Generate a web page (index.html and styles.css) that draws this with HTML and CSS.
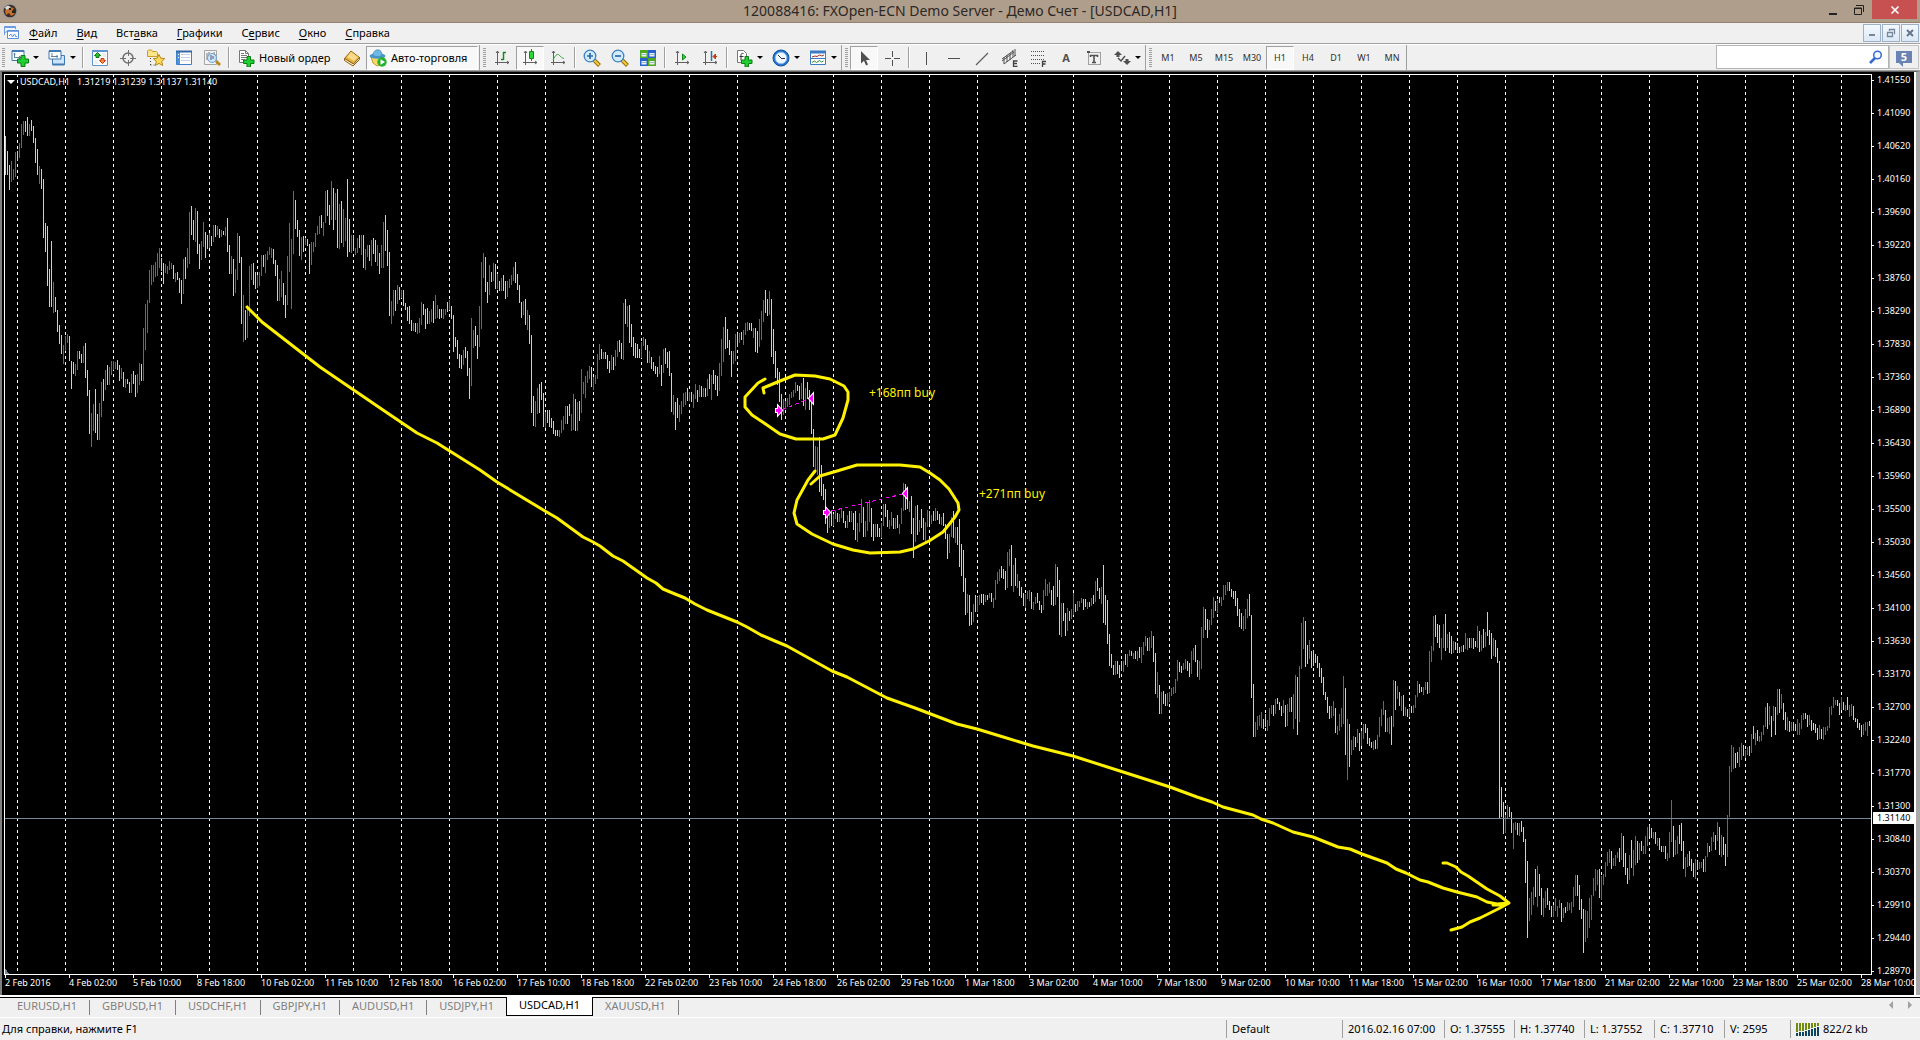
FILE: index.html
```html
<!DOCTYPE html>
<html lang="ru">
<head>
<meta charset="utf-8">
<meta name="viewport" content="width=device-width, initial-scale=1">
<title>120088416: FXOpen-ECN Demo Server - Демо Счет - [USDCAD,H1]</title>
<link rel="stylesheet" href="styles.css">
</head>
<body>
<header class="titlebar">
  <svg class="app-icon" width="16" height="16" viewBox="0 0 16 16"><circle cx="8" cy="8" r="7.5" fill="#9a9a9a"/><circle cx="8" cy="8" r="6.3" fill="#3a2c24"/><path d="M3 8L7 4L12 5L10 8L13 11L9 13L7 10L4 12Z" fill="#c4702c"/><path d="M3 4L6 2.500L9 4L6 6L4 7Z" fill="#d8d8d8"/><path d="M7 5h2v2H7zM10 8h3v2h-3z" fill="#221"/></svg>
  <h1 class="title">120088416: FXOpen-ECN Demo Server - Демо Счет - [USDCAD,H1]</h1>
  <div class="win-buttons">
    <button class="win" aria-label="Свернуть"><svg width="10" height="12" viewBox="0 0 10 12"><path d="M1 9h8v2H1z" fill="#222"/></svg></button>
    <button class="win" aria-label="Восстановить"><svg width="10" height="12" viewBox="0 0 10 12"><path d="M.5 4h7v6.500h-7zM0 4.500h8M2 1.500h7.500V8" fill="none" stroke="#222"/></svg></button>
    <button class="win close" aria-label="Закрыть"><svg width="10" height="10" viewBox="0 0 10 10"><path d="M1.500 1.500l7 7M8.500 1.500l-7 7" stroke="#fff" stroke-width="1.600"/></svg></button>
  </div>
</header>

<nav class="menubar">
  <svg class="doc-icon" width="16" height="16" viewBox="0 0 16 16"><path d="M.5 10V1.500h11V4M.5 2.500h11" fill="#eef5ff" stroke="#6b9be0"/><path d="M3.500 5.500h11v8h-11z" fill="#fff" stroke="#5a8fdc"/><path d="M3.500 6h11" stroke="#5a8fdc" stroke-width="1.500"/><path d="M5 11l2-2 1.500 3 2-3 1.500 3 1-1M1.500 8l1-2" fill="none" stroke="#5a8fdc"/></svg>
  <button class="menu"><u>Ф</u>айл</button>
  <button class="menu"><u>В</u>ид</button>
  <button class="menu">Вст<u>а</u>вка</button>
  <button class="menu"><u>Г</u>рафики</button>
  <button class="menu">С<u>е</u>рвис</button>
  <button class="menu"><u>О</u>кно</button>
  <button class="menu"><u>С</u>правка</button>
  <div class="mdi-buttons">
    <button class="mdi" aria-label="Свернуть график"><svg width="10" height="10" viewBox="0 0 10 10"><path d="M2 6h6v2H2z" fill="#76879b"/></svg></button>
    <button class="mdi" aria-label="Восстановить график"><svg width="10" height="10" viewBox="0 0 10 10"><path d="M1.500 4.500h5v4h-5zM1 4.500h6M3.500 3V1.500h5v4H8" fill="none" stroke="#76879b" stroke-width="1.300"/></svg></button>
    <button class="mdi" aria-label="Закрыть график"><svg width="10" height="10" viewBox="0 0 10 10"><path d="M2 2l6 6M8 2l-6 6" stroke="#66778b" stroke-width="2"/></svg></button>
  </div>
</nav>

<div class="toolbar">
  <div class="group first">
    <button class="tool drop" aria-label="Новый график"><svg width="18" height="18" viewBox="0 0 18 18"><path d="M1 1.500h12v10H1z" fill="#fff" stroke="#3f7ab4"/><path d="M1 2h12" stroke="#3f7ab4" stroke-width="2"/><path d="M3.500 4v5M3 8.500h7M8.500 7v3M2.500 5h2" stroke="#6080a0" fill="none"/><path d="M10 6.500h4v3.500h3.500v4H14v3.500h-4V14H6.500v-4H10z" fill="#1fd032" stroke="#0a7d14"/></svg></button>
    <button class="tool drop" aria-label="Профили"><svg width="18" height="18" viewBox="0 0 18 18"><path d="M4.500 6.500h12v9h-12z" fill="#cfe4fb" stroke="#3f7ab4"/><path d="M4.500 15.500h12" stroke="#3f7ab4" stroke-width="2"/><path d="M1 2h12v8H1z" fill="#fff" stroke="#3f7ab4"/><path d="M1 2h12" stroke="#3f7ab4" stroke-width="2"/><path d="M4 4v4M3 7.500h7M9 6v3" stroke="#6080a0"/></svg></button>
    <span class="sep"></span>
    <button class="tool" aria-label="Обзор рынка"><svg width="18" height="18" viewBox="0 0 18 18"><path d="M1.500 1.500h15v15h-15z" fill="#fff" stroke="#5d96d3"/><path d="M1.500 2h15" stroke="#5d96d3" stroke-width="2"/><path d="M3.500 14h4M11 5h4M10 7h5M3.500 12h3" stroke="#ddd"/><path d="M6.500 3.500l3 3H8v2H5v-2H3.500z" fill="#2bc22b" stroke="#0d7a12"/><path d="M11.500 14.500l-3-3H10v-2h3v2h1.500z" fill="#ff8a4a" stroke="#cc3a10"/></svg></button>
    <button class="tool" aria-label="Окно данных"><svg width="18" height="18" viewBox="0 0 18 18"><circle cx="9" cy="9" r="5" fill="none" stroke="#707070" stroke-width="1.500"/><path d="M9.500 1v6M9.500 11v6M1 9.500h6M11 9.500h6" stroke="#707070"/></svg></button>
    <button class="tool" aria-label="Навигатор"><svg width="20" height="18" viewBox="0 0 20 18"><path d="M1.500 7.500V2l1-1h3l1 1.500h4l1 1v4z" fill="#fbe58c" stroke="#c79d25"/><path d="M4.500 9v8M4.500 16h5" stroke="#444" stroke-dasharray="1 2"/><path d="M13 5.500l1.700 3.700 4 .4-3 2.800.9 4.100-3.600-2.100-3.600 2.100.9-4.100-3-2.800 4-.4z" fill="#ffdc57" stroke="#b98412"/></svg></button>
    <button class="tool" aria-label="Терминал"><svg width="18" height="18" viewBox="0 0 18 18"><path d="M1.500 2.500h15v13h-15z" fill="#fff" stroke="#3f7fc8"/><path d="M2 3h3v12H2z" fill="#4d8fe0"/><path d="M1 2.500h16" stroke="#3568a8" stroke-width="2"/><path d="M6 5.500h9M6 8.500h9M6 11.500h9" stroke="#bcd2ee"/><path d="M3 5.500h1M3 8.500h1" stroke="#fff"/></svg></button>
    <button class="tool" aria-label="Тестер стратегий"><svg width="18" height="18" viewBox="0 0 18 18"><path d="M1.500 1.500h12v14h-12z" fill="#f4f4f4" stroke="#a5a5a5"/><path d="M4 4v7M6 3v5M11 3v3M12 5v6" stroke="#777"/><path d="M13 12l4 4" stroke="#b98b1c" stroke-width="3"/><circle cx="9" cy="9" r="4.500" fill="#c9e5fb" fill-opacity=".85" stroke="#6ba3d6"/><path d="M8 6v5M10 7v3" stroke="#557"/></svg></button>
    <span class="sep"></span>
    <button class="tool wide order"><svg width="18" height="18" viewBox="0 0 18 18"><path d="M2.500 1.500h6l3 3v9h-9z" fill="#fff" stroke="#777"/><path d="M8.500 1.500v3h3" fill="none" stroke="#777"/><path d="M4 4.500h3M4 6.500h6M4 8.500h6M4 10.500h4" stroke="#777"/><path d="M10 7.500h3.500v3.500H17v3.500h-3.500V18H10v-3.500H6.500V11H10z" fill="#1fd032" stroke="#0a7d14"/></svg>Новый ордер</button>
    <button class="tool" aria-label="MetaEditor"><svg width="18" height="18" viewBox="0 0 18 18"><path d="M1.500 9.500L8 2l8.500 6.500-6 6.500z" fill="#e8b243" stroke="#9a6a14"/><path d="M4 8l4-5 7 5-4 4z" fill="#f9db8a"/><path d="M1.500 9.500v2l8.500 5.500 6.500-6.500v-2L10.500 15z" fill="#fff4d0" stroke="#8f6113"/></svg></button>
    <button class="tool wide auto on"><svg width="18" height="18" viewBox="0 0 18 18"><path d="M2 8h13l-3 7-4 2-4-3z" fill="#f6d864" stroke="#c39b25"/><ellipse cx="8.500" cy="7" rx="8" ry="2.800" fill="#4b98cc"/><path d="M4 6.500C4 2 7 .8 9 .8s4 2 4 5.700c-3 1.500-6 1.500-9 0z" fill="#6db8e6" stroke="#3c86b8" stroke-width=".7"/><circle cx="13" cy="13" r="4.700" fill="#24b22b"/><path d="M11.500 10.200v5.600l4.500-2.800z" fill="#fff"/></svg>Авто-торговля</button>
  </div>
  <div class="group">
    <button class="tool" aria-label="Бары"><svg width="18" height="18" viewBox="0 0 18 18"><path d="M4.500 2v14M2 13.500h14M3 4l1.500-2L6 4M14 12l2 1.500-2 1.500" fill="none" stroke="#606060"/><path d="M10.500 3v8M10 3.500h3M8 10.500h2.500" stroke="#128a1c" stroke-width="1.500"/></svg></button>
    <button class="tool on" aria-label="Японские свечи"><svg width="18" height="18" viewBox="0 0 18 18"><path d="M4.500 2v14M2 13.500h14M3 4l1.500-2L6 4M14 12l2 1.500-2 1.500" fill="none" stroke="#606060"/><path d="M10.500 0v12" stroke="#128a1c"/><path d="M8.500 2.500h4v7h-4z" fill="#2fd63a" stroke="#128a1c"/></svg></button>
    <button class="tool" aria-label="Линия"><svg width="18" height="18" viewBox="0 0 18 18"><path d="M4.500 2v14M2 13.500h14M3 4l1.500-2L6 4M14 12l2 1.500-2 1.500" fill="none" stroke="#606060"/><path d="M4 11c3-6 5-7 7-4 1 1 2 2 4 2.500" fill="none" stroke="#37a53f"/></svg></button>
    <span class="sep"></span>
    <button class="tool" aria-label="Увеличить"><svg width="18" height="18" viewBox="0 0 18 18"><path d="M11 11l5.500 5.500" stroke="#8f6c10" stroke-width="4"/><path d="M11 11l5 5" stroke="#f2c934" stroke-width="2.200"/><circle cx="7" cy="7" r="5.800" fill="#d3ecfd" stroke="#3c82c4" stroke-width="1.300"/><path d="M4 7h6M7 4v6" stroke="#2c6ca8" stroke-width="1.700"/></svg></button>
    <button class="tool" aria-label="Уменьшить"><svg width="18" height="18" viewBox="0 0 18 18"><path d="M11 11l5.500 5.500" stroke="#8f6c10" stroke-width="4"/><path d="M11 11l5 5" stroke="#f2c934" stroke-width="2.200"/><circle cx="7" cy="7" r="5.800" fill="#d3ecfd" stroke="#3c82c4" stroke-width="1.300"/><path d="M4 7h6" stroke="#2c6ca8" stroke-width="1.700"/></svg></button>
    <button class="tool" aria-label="Упорядочить окна"><svg width="18" height="18" viewBox="0 0 18 18"><path d="M1 1h8v8H1zM9 9h8v8H9z" fill="#4fa81d"/><path d="M9 1h8v8H9zM1 9h8v8H1z" fill="#2a62cc"/><path d="M2.500 4h5v3.500h-5zM10.500 4h5v3.500h-5zM2.500 12h5v3.500h-5zM10.500 12h5v3.500h-5z" fill="#e9f3f6"/><path d="M3 5.500h4M11 5.500h4M3 13.500h4M11 13.500h4" stroke="#98b8c8"/></svg></button>
    <span class="sep"></span>
    <button class="tool" aria-label="Автопрокрутка"><svg width="18" height="18" viewBox="0 0 18 18"><path d="M4.500 2v14M2 13.500h14M3 4l1.500-2L6 4M14 12l2 1.500-2 1.500" fill="none" stroke="#606060"/><path d="M9.500 5v6l3.500-3z" fill="#2fd63a" stroke="#128a1c"/></svg></button>
    <button class="tool" aria-label="Сдвиг графика"><svg width="18" height="18" viewBox="0 0 18 18"><path d="M4.500 2v14M2 13.500h14M3 4l1.500-2L6 4M14 12l2 1.500-2 1.500" fill="none" stroke="#606060"/><path d="M10.500 2v10" stroke="#2674a8" stroke-width="1.500"/><path d="M16 7.500h-3M14.500 5L12 7.500l2.500 2.500z" stroke="#c03a10" fill="#c03a10"/></svg></button>
    <span class="sep"></span>
    <button class="tool drop" aria-label="Индикаторы"><svg width="18" height="18" viewBox="0 0 18 18"><path d="M2.500 1.500h6l3 3v9h-9z" fill="#fff" stroke="#777"/><path d="M8.500 4.500C6.500 4 6 5 6 6.500v5M4.500 7.500h4" fill="none" stroke="#333"/><path d="M10 7.500h3.500v3.500H17v3.500h-3.500V18H10v-3.500H6.500V11H10z" fill="#1fd032" stroke="#0a7d14"/></svg></button>
    <button class="tool drop" aria-label="Периоды"><svg width="18" height="18" viewBox="0 0 18 18"><circle cx="9" cy="9" r="8" fill="#2377d4" stroke="#154f9c"/><circle cx="9" cy="9" r="5.800" fill="#f2f8ff" stroke="#88b7ec"/><path d="M9.500 9.500L6 6M9 9.500h4" stroke="#333" fill="none"/></svg></button>
    <button class="tool drop" aria-label="Шаблоны"><svg width="18" height="18" viewBox="0 0 18 18"><path d="M1.500 2.500h15v13h-15z" fill="#fff" stroke="#3b7ac4"/><path d="M1 3h16" stroke="#3b7ac4" stroke-width="3"/><path d="M2 9.500h14" stroke="#3b7ac4"/><path d="M3 8l3-1 2 .5L10.500 6 13 7l2-1" fill="none" stroke="#a03020"/><path d="M3 13.500l2.500-1.500 2 1.500 3-2 2 1.500 2-1" fill="none" stroke="#2c8a30"/></svg></button>
  </div>
  <div class="group">
    <button class="tool on" aria-label="Курсор"><svg width="18" height="18" viewBox="0 0 18 18"><path d="M6 2v12.500l3-2.700 2 4.700 2-1-2-4.500h4z" fill="#505050"/></svg></button>
    <button class="tool" aria-label="Перекрестие"><svg width="18" height="18" viewBox="0 0 18 18"><path d="M9.500 2v6M9.500 11v6M2 9.500h6M11 9.500h6" stroke="#505050"/></svg></button>
    <span class="sep"></span>
    <button class="tool" aria-label="Вертикальная линия"><svg width="18" height="18" viewBox="0 0 18 18"><path d="M9.500 3v13" stroke="#505050"/></svg></button>
    <button class="tool" aria-label="Горизонтальная линия"><svg width="18" height="18" viewBox="0 0 18 18"><path d="M3 9.500h12" stroke="#505050"/></svg></button>
    <button class="tool" aria-label="Трендовая линия"><svg width="18" height="18" viewBox="0 0 18 18"><path d="M3 16L15 4" stroke="#606060" stroke-width="1.200"/></svg></button>
    <button class="tool" aria-label="Канал"><svg width="18" height="18" viewBox="0 0 18 18"><path d="M1 10l11-8M1 12l12-9M3 15L15 6M3 8v7M6 6v7M9 4v7M12 1v7M14 0v7" stroke="#505050"/><path d="M16.500 12h-4v5.500h4M12.500 14.500h3.500" fill="none" stroke="#404040" stroke-width="1.300"/></svg></button>
    <button class="tool" aria-label="Фибоначчи"><svg width="18" height="18" viewBox="0 0 18 18"><path d="M2 2.500h14M2 6.500h14M2 10.500h14M2 14.500h9" stroke="#505050" stroke-dasharray="1 1"/><path d="M13.500 18v-5.500H17M13.500 15h3" fill="none" stroke="#404040" stroke-width="1.300"/></svg></button>
    <button class="tool letter">A</button>
    <button class="tool" aria-label="Текстовая метка"><svg width="18" height="18" viewBox="0 0 18 18"><path d="M3.500 3.500h12v12h-12z" fill="none" stroke="#505050" stroke-dasharray="1 1"/><path d="M2 2h3v2H2z" fill="#505050"/><path d="M5.500 8V6.500h7V8M9 6.500v7M7 13.500h4" fill="none" stroke="#505050" stroke-width="1.600"/></svg></button>
    <button class="tool drop" aria-label="Стрелки"><svg width="18" height="18" viewBox="0 0 18 18"><path d="M5 2l4 4H6.500v2h-3V6H1z" fill="#505050"/><path d="M14 16l-4-4h2.500v-2h3v2H18z" fill="#505050"/><path d="M5 9l3 3 4-5" fill="none" stroke="#505050" stroke-width="1.500"/></svg></button>
  </div>
  <div class="group last">
    <button class="tool tf">M1</button><button class="tool tf">M5</button><button class="tool tf">M15</button><button class="tool tf">M30</button><button class="tool tf on">H1</button><button class="tool tf">H4</button><button class="tool tf">D1</button><button class="tool tf">W1</button><button class="tool tf">MN</button>
  </div>
  <form class="search">
    <input type="text" class="search-box" aria-label="Поиск">
    <button type="button" class="search-go" aria-label="Найти"><svg width="16" height="16" viewBox="0 0 16 16"><path d="M7 9l-5 5" stroke="#3a68d0" stroke-width="2.600"/><circle cx="9.500" cy="6" r="3.800" fill="#f6faff" stroke="#3a68d0" stroke-width="1.500"/></svg></button>
    <button type="button" class="chat"><span class="bubble">5</span></button>
  </form>
</div>

<main class="chart">
  <div class="plot" id="plot">
    <p class="quote"><span class="caret"></span><span>USDCAD,H1&nbsp;&nbsp;&nbsp;1.31219 1.31239 1.31137 1.31140</span></p>
    <svg class="canvas" role="img" aria-label="USDCAD, H1">
      <g transform="translate(-5 -75)">
        <path class="grid" id="grid"/>
        <path class="down" id="down"/>
        <path class="up" id="up"/>
        <path class="flat" id="flat"/>
        <path class="bid" d="M5 818.500H4000"/>
        <path d="M5 968v6h4z" fill="#778899"/>
        <path class="trade" d="M782 410L808 399M831 511L903 494"/>
        <g id="marks" class="marks">
          <path d="M776 409h2v-3l4 4.500-4 4.500v-3h-2zM813 394v9l-4-4.500z"/>
          <path d="M824 511h2v-3l4 4.500-4 4.500v-3h-2zM907 489v9l-4-4.500z"/>
        </g>
        <g class="pen">
          <path d="M247 307L262 322L320 367L383 410L417 433L437 443L480 470L497 482L545 511L557 518L583 537L593 542L600 546L613 556L623 561L640 573L647 578L656 583L663 589L675 594L685 598L695 604L707 610L737 622L747 627L761 635L775 641L787 646L832 671L847 677L887 698L915 708L957 724L977 729L1000 736L1033 746L1073 756L1120 771L1170 787L1197 797L1212 802L1223 807L1253 815L1261 819L1273 823L1293 832L1313 837L1338 847L1350 849L1362 854L1387 863L1396 869L1406 873L1420 880L1428 882L1443 888L1457 892L1477 897L1487 902L1497 904L1508 903"/>
          <path d="M1443 863H1447L1456 867L1461 872L1468 876L1487 889L1500 896L1509 903L1500 908L1480 918L1470 922L1462 927L1451 930M1493 905H1502"/>
          <path d="M765 379L758 383L745 397V407L752 415L767 425L780 434L796 439H823L835 435L843 418L848 400V392L844 386L830 379L815 376L795 375L780 381L763 388L764 393"/>
          <path d="M815 471L808 480L797 500L794 513L797 524L812 534L833 544L853 550L870 553L900 552L913 549L929 541L943 532L955 517L959 510L958 503L949 489L940 480L930 473L920 467L900 465H857L837 471L820 476L811 484"/>
        </g>
        <text class="note" x="869" y="397">+168пп buy</text>
        <text class="note" x="979" y="498">+271пп buy</text>
      </g>
    </svg>
  </div>
  <ol class="prices">
    <li>1.41550</li><li>1.41090</li><li>1.40620</li><li>1.40160</li><li>1.39690</li><li>1.39220</li><li>1.38760</li><li>1.38290</li><li>1.37830</li><li>1.37360</li><li>1.36890</li><li>1.36430</li><li>1.35960</li><li>1.35500</li><li>1.35030</li><li>1.34560</li><li>1.34100</li><li>1.33630</li><li>1.33170</li><li>1.32700</li><li>1.32240</li><li>1.31770</li><li>1.31300</li><li>1.30840</li><li>1.30370</li><li>1.29910</li><li>1.29440</li><li>1.28970</li>
    <li class="bid-tag">1.31140</li>
  </ol>
  <ol class="times">
    <li>2 Feb 2016</li><li>4 Feb 02:00</li><li>5 Feb 10:00</li><li>8 Feb 18:00</li><li>10 Feb 02:00</li><li>11 Feb 10:00</li><li>12 Feb 18:00</li><li>16 Feb 02:00</li><li>17 Feb 10:00</li><li>18 Feb 18:00</li><li>22 Feb 02:00</li><li>23 Feb 10:00</li><li>24 Feb 18:00</li><li>26 Feb 02:00</li><li>29 Feb 10:00</li><li>1 Mar 18:00</li><li>3 Mar 02:00</li><li>4 Mar 10:00</li><li>7 Mar 18:00</li><li>9 Mar 02:00</li><li>10 Mar 10:00</li><li>11 Mar 18:00</li><li>15 Mar 02:00</li><li>16 Mar 10:00</li><li>17 Mar 18:00</li><li>21 Mar 02:00</li><li>22 Mar 10:00</li><li>23 Mar 18:00</li><li>25 Mar 02:00</li><li>28 Mar 10:00</li>
  </ol>
</main>

<nav class="tabs">
  <button class="tab">EURUSD,H1</button>
  <button class="tab">GBPUSD,H1</button>
  <button class="tab">USDCHF,H1</button>
  <button class="tab">GBPJPY,H1</button>
  <button class="tab">AUDUSD,H1</button>
  <button class="tab">USDJPY,H1</button>
  <button class="tab current">USDCAD,H1</button>
  <button class="tab">XAUUSD,H1</button>
  <div class="tab-scroll">
    <button class="scroll" aria-label="Назад"><svg width="6" height="8" viewBox="0 0 6 8"><path d="M5 0v8L1 4z" fill="#a0a0a0"/></svg></button>
    <button class="scroll" aria-label="Вперед"><svg width="6" height="8" viewBox="0 0 6 8"><path d="M1 0v8l4-4z" fill="#a0a0a0"/></svg></button>
  </div>
</nav>

<footer class="status">
  <span class="hint">Для справки, нажмите F1</span>
  <span class="cell profile">Default</span>
  <span class="cell date">2016.02.16 07:00</span>
  <span class="cell">O: 1.37555</span>
  <span class="cell">H: 1.37740</span>
  <span class="cell">L: 1.37552</span>
  <span class="cell">C: 1.37710</span>
  <span class="cell volume">V: 2595</span>
  <span class="cell traffic"><svg width="24" height="13" viewBox="0 0 24 13"><path d="M1 0v9M4 0v8M7 0v8M10 0v7M13 0v6M16 0v5M19 0v4M22 0v3" stroke="#708c10" stroke-width="2"/><path d="M1 10v3M4 9v4M7 9v4M10 8v5M13 7v6M16 6v7M19 5v8M22 4v9" stroke="#0d4560" stroke-width="2"/></svg>822/2 kb</span>
</footer>
<script src="chart.js"></script>
</body>
</html>
```
FILE: chart.js
```js
// Hourly ranges: [x of the first bar, "direction + top - bottom" for each bar].
// g = falling, p = rising, o = unchanged. Bars stand two pixels apart.
const days = [
[5, "g136-175 g151-175 g165-190 p161-182 p169-180 p152-177"],
[17, "g151-161 p143-158 p124-148 p121-135 g121-132 g117-136 p124-136 g120-131 g126-143 g138-163 g149-175 p166-184 g169-189 g179-238 g223-252 g226-286 g269-307 g241-307 p282-313 g297-312 g310-332 g325-344 g335-354 p345-364"],
[65, "p336-351 p334-343 g336-361 g361-389 g362-374 p364-376 p351-370 g351-359 g354-363 p346-363 g343-378 g370-396 g390-434 p413-447 p404-431 g389-433 g414-440 p403-440 p382-417 g379-401 p370-390 g365-385 p367-385 p361-375"],
[113, "p361-370 p362-369 g360-370 g365-381 p368-379 g372-387 p379-388 g379-384 g382-393 p374-393 g371-384 g375-397 p374-393 p363-385 g364-381 p328-381 p304-350 p300-333 p270-303 p265-285 p265-282 p262-277 p253-276 p248-268"],
[161, "g258-271 g263-284 p264-273 p266-274 p261-270 p263-269 g265-279 p273-282 g272-280 g278-293 g280-304 p259-294 g257-279 p248-268 p212-264 g206-235 g220-240 p208-242 g211-254 g244-269 p241-260 p222-247 g232-258 g235-249"],
[209, "p233-248 g236-246 p225-242 g225-237 p226-235 g229-238 p230-237 g231-235 p227-236 g218-252 g245-274 p256-274 g259-296 p269-293 p233-280 g236-263 g257-324 p295-342 g310-340 p305-338 p266-316 p264-280 g263-285 g272-289"],
[257, "p275-288 p272-286 p255-276 g255-267 p254-273 p251-260 p247-255 p248-258 g249-264 g260-276 g265-301 p279-301 p271-297 g283-305 g295-318 p256-305 p223-272 p239-309 p191-254 g200-229 g220-237 g230-256 p237-260 g236-252"],
[305, "p238-245 g239-246 g244-274 p242-265 p242-252 p233-247 p226-235 p216-234 g215-228 p222-236 p191-223 g190-216 g205-225 p181-220 g188-230 p193-220 g189-248 p204-249 g201-243 p209-247 p218-241 g179-257 g219-252 p235-253"],
[353, "g235-251 p248-255 p238-253 g235-248 p235-255 g235-268 p249-270 p245-257 g245-261 p240-266 g238-254 g240-262 p245-266 g253-274 p245-268 p222-268 g215-251 g230-266 g252-316 p301-324 p290-316 g290-311 p285-304 g287-300"],
[401, "p290-298 g290-306 g303-310 g307-321 g306-324 g320-331 p323-331 g323-332 p323-334 p318-333 p302-325 g304-315 g309-329 g308-324 p311-324 p309-322 g301-323 p295-319 p305-318 g309-319 g309-318 p309-319 p309-315 g302-312"],
[449, "p300-310 g306-319 g315-352 g337-347 g340-359 g354-368 g355-369 p350-365 g347-358 g351-376 g368-399 p318-386 p330-348 g326-346 g335-359 p306-347 p262-329 p253-278 g257-292 g282-303 p265-295 g272-282 p263-281 g264-289"],
[497, "p274-289 g281-291 p278-291 g275-291 g281-299 p281-297 p279-288 p275-285 p267-281 g262-283 g274-290 g285-303 g302-318 p301-315 g299-325 p310-330 g315-344 g335-413 g396-426 p401-427 p388-414 g384-413 g382-400 g393-427"],
[545, "p412-428 g410-423 g410-427 g418-428 g421-434 g430-436 g430-436 p430-437 p420-433 p416-430 p406-424 g406-424 g404-416 p414-431 p394-430 g399-431 p402-431 g401-421 p369-413 p382-394 p376-398 p371-383 p366-379 g367-387"],
[593, "p377-390 p375-384 p354-379 p344-360 g349-359 p352-359 g352-359 g355-369 g361-373 p355-370 g357-370 p350-366 p341-357 g340-352 g343-359 p303-360 g299-324 p306-327 g305-343 g324-347 g337-356 g343-358 g344-358 g349-358"],
[641, "p342-358 p337-346 g339-350 g345-363 p351-363 g357-369 g362-371 g366-374 g367-377 p356-374 g365-386 p349-373 g348-364 g352-368 g351-376 g373-412 p395-415 g402-430 g398-418 p405-422 p401-414 p393-407 p392-405 g388-401"],
[689, "p392-401 g392-402 p394-408 p384-399 g390-402 p385-397 g386-397 p388-397 g388-397 p379-396 g374-389 p375-400 g370-384 g375-390 g376-396 p363-391 p339-376 p327-362 g317-349 g329-348 g340-355 g351-377 p351-364 p334-361"],
[737, "g333-347 p333-343 g332-340 p330-345 p323-335 p322-331 g323-330 g323-331 p328-338 g328-352 g331-353 p319-347 p311-340 p300-322 g290-313 g299-316 p291-315 g299-357 g329-364 g351-378 g368-385 g372-402 g394-420 p399-415"],
[785, "p401-408 p398-407 p394-405 p392-398 p390-397 p382-393 g385-391 g386-400 p383-399 g378-406 p388-410 g382-399 g390-410 g401-434 g429-467 p446-473 p447-475 g437-492 g465-496 g484-500 g489-524 g514-533 p510-528 g510-526"],
[833, "p514-526 p511-519 g513-522 p514-522 p509-518 g511-523 g521-528 p515-528 g511-522 p511-522 g513-530 g511-540 p523-542 p513-532 p499-523 g507-537 p521-537 p502-531 p500-522 g508-537 g524-541 p524-537 g524-537 g528-537"],
[881, "p523-538 p504-526 g504-517 g510-527 p520-529 p512-526 g518-529 p518-529 g515-528 p524-534 p508-524 p483-511 g484-510 g497-509 p501-512 g496-534 g518-558 p506-542 g505-535 p520-532 g509-528 g518-540 p522-542 p510-527"],
[929, "g511-524 p515-524 g511-521 p508-521 g511-520 g514-524 p517-525 g513-526 g524-539 g534-559 p534-553 p517-537 g511-538 p527-543 g527-545 g519-567 g544-576 g550-592 g578-615 p594-613 g595-626 g612-625 p604-622 g595-612"],
[977, "p597-612 p595-605 g594-603 g594-605 p595-602 g595-600 p593-598 g593-602 p598-608 p580-600 p572-584 p569-581 g566-578 g569-579 g571-590 p552-588 p549-566 g545-586 p565-592 g558-586 p574-588 g581-596 g587-598 g593-606"],
[1025, "p594-608 p591-599 p590-601 g592-609 p602-610 p597-604 g593-603 g601-610 g605-613 p590-610 p579-596 p584-596 p582-593 g590-605 g586-606 p564-605 g567-597 g580-635 p603-637 g603-621 g613-636 p608-631 g611-621 p609-619"],
[1073, "p593-615 g604-612 p601-611 p601-607 p598-603 g599-610 g599-607 p602-609 g602-607 p598-606 g595-604 p581-602 g578-591 g588-599 p587-604 g565-623 g595-625 g600-644 g634-666 g654-668 g665-675 p661-675 g661-674 g665-678"],
[1121, "g661-671 p661-672 g654-665 p654-667 p650-656 g651-656 p653-659 g651-659 p651-661 g647-658 p647-663 p642-655 p636-646 g638-651 p637-651 p631-648 g636-662 g653-694 p672-698 g685-714 p692-714 g691-704 g694-706 p693-706"],
[1169, "p692-702 p688-696 p687-694 p679-693 p660-681 g662-672 g666-673 p663-670 p659-669 g661-671 g663-677 p651-674 p648-660 g645-662 g660-677 p661-680 p627-669 p607-638 g609-630 g619-638 p620-630 p609-625 p597-618 g601-611"],
[1217, "p600-613 g597-603 p597-606 p585-600 p585-595 p582-591 g582-591 g589-597 g591-599 g591-606 g598-616 g609-627 g613-629 p616-631 p609-629 p599-618 g594-616 g615-698 g684-737 p722-737 p716-730 p715-726 p712-728 g719-729"],
[1265, "g714-727 p720-731 p708-726 p705-714 g705-716 p699-714 g698-704 g702-710 g706-716 p700-713 g705-727 p704-726 p698-712 g697-712 p694-729 p675-719 g677-735 p666-722 p623-669 p617-649 g621-667 g645-664 p640-659 g651-668"],
[1313, "g650-666 g654-663 g656-668 g663-677 g668-683 g677-695 g692-700 g697-713 g706-719 p706-718 p701-716 g708-733 p726-735 p714-731 p708-727 p676-724 g688-755 p719-780 g724-767 p740-755 p736-750 g737-747 p729-743 g733-751"],
[1361, "p731-746 p724-739 g724-733 g728-744 g738-746 g742-748 p741-750 g740-749 p735-749 p717-737 p709-726 p701-715 g710-732 p718-732 p717-734 g716-745 p680-727 g681-710 p686-699 g692-706 p696-711 g695-716 p707-716 g709-717"],
[1409, "p708-717 g706-713 p705-713 p695-708 p681-697 g684-693 g687-692 p687-695 p682-690 g682-694 p651-693 p646-662 p616-651 g615-637 g624-643 g625-648 p638-660 p624-648 g614-651 p634-648 g632-653 g636-654 p641-653 g642-650"],
[1457, "g643-652 g647-653 p646-652 g645-652 p633-649 p638-650 g638-648 p638-648 g638-649 g641-647 p626-648 g631-652 p635-651 g629-648 p632-647 g612-636 g630-645 g633-659 p638-656 g640-657 g648-663 g661-819 g787-817 g802-834"],
[1505, "p815-833 p805-818 g807-817 g812-833 p823-849 p822-830 g823-835 p823-836 g821-832 g827-842 g839-883 g861-938 p898-921 p892-915 p887-905 g869-897 p866-907 g874-896 g888-915 p898-917 p891-908 g888-905 g901-910 g906-917"],
[1553, "p905-917 p898-911 p906-917 p900-908 g903-922 p908-918 g907-913 p902-911 p903-910 p902-913 p887-907 p875-896 g875-896 g885-910 g899-919 g909-953 p910-942 p911-938 p898-928 p895-920 p878-896 p869-891 p870-885 g869-898"],
[1601, "p876-900 p874-885 p862-877 p852-866 p849-863 g851-869 p858-866 p855-866 p852-858 g848-862 p833-860 g836-867 g853-875 g868-884 p855-880 g840-868 p850-876 p836-865 g841-863 p843-860 g841-851 p846-854 p836-854 p827-846"],
[1649, "g825-836 g828-838 p832-839 g832-844 p838-846 g838-850 g846-852 p846-852 g846-859 p853-861 p832-858 p800-842 g826-857 p840-855 p836-854 g825-844 g823-851 g841-869 p857-877 p854-867 g851-866 g859-871 g863-877 p859-879"],
[1697, "g861-870 p862-869 p862-868 g859-872 p856-872 p843-857 g846-852 p837-851 p832-842 g835-850 p822-841 g827-855 p835-857 g837-855 g844-866 p815-857 p766-817 p745-772 p747-769 g753-768 g752-763 p747-767 p743-760 g745-756"],
[1745, "p750-758 p747-755 g746-756 p734-753 o726-739 p733-745 g730-741 p736-742 p732-741 p725-735 p707-727 g703-729 p706-725 g716-737 p706-721 g707-735 p689-715 g689-713 p694-709 g703-720 g712-730 p717-731 g721-732 p722-731"],
[1793, "g722-731 g724-731 p719-735 p723-735 p715-729 p713-720 g713-719 g715-727 p715-725 g720-731 g723-730 g724-733 g728-740 p725-739 g729-739 p727-740 p727-735 p726-731 p707-728 p706-715 p697-708 p700-705 g700-706 g703-715"],
[1841, "p697-710 g702-710 p705-711 g697-710 p705-717 p704-716 g706-720 g718-722 g719-728 g723-730 g725-737 p724-735 p722-731 p722-736 g721-726"]
];

const paths = { g: "", p: "", o: "" };
let grid = "";
for (const [start, bars] of days) {
  if (start > 5) grid += `M${start + 0.5} 74V974`;
  bars.split(" ").forEach((bar, i) => {
    const [top, bottom] = bar.slice(1).split("-");
    paths[bar[0]] += `M${start + i * 2 + 0.5} ${top}V${bottom}`;
  });
}
document.getElementById("grid").setAttribute("d", grid);
document.getElementById("down").setAttribute("d", paths.g);
document.getElementById("up").setAttribute("d", paths.p);
document.getElementById("flat").setAttribute("d", paths.o);
```
FILE: styles.css
```css
* { box-sizing: border-box; }

:root {
  --face: #f0f0f0;
  --ui: "Noto Sans", "Open Sans", sans-serif;
}

body {
  margin: 0;
  min-height: 100vh;
  display: flex;
  flex-direction: column;
  background: var(--face);
  font: 11px/16px var(--ui);
  color: #000;
}

button {
  margin: 0;
  padding: 0;
  border: 0;
  background: none;
  font: inherit;
  color: inherit;
}

svg { display: block; flex: none; }

ol { margin: 0; padding: 0; list-style: none; }

/* Title bar */
.titlebar {
  display: grid;
  grid-template-columns: 120px 1fr 120px;
  height: 23px;
  background: #b09e8c;
  border-bottom: 1px solid #948270;
}
.app-icon { margin: 3px 0 0 2px; }
.title {
  margin: 0;
  font: 14px/22px var(--ui);
  text-align: center;
  white-space: nowrap;
  color: #2b2825;
}
.win-buttons { display: flex; justify-content: flex-end; padding-right: 3px; }
.win { width: 26px; height: 19px; display: grid; place-items: center; }
.win.close { width: 45px; background: #c75050; }

/* Menu */
.menubar {
  display: flex;
  align-items: center;
  height: 21px;
  border-bottom: 1px solid #a0a0a0;
}
.doc-icon { margin-left: 4px; }
.menu { padding: 0 10px 0 9px; height: 20px; line-height: 20px; text-underline-offset: 2px; }
.mdi-buttons { display: flex; gap: 1px; margin-left: auto; padding-right: 1px; }
.mdi {
  width: 18px;
  height: 18px;
  display: grid;
  place-items: center;
  border: 1px solid #9db0c6;
  background: linear-gradient(#f4f9ff, #dbe8f6);
}

/* Toolbar */
.toolbar {
  display: flex;
  height: 27px;
  border-top: 1px solid #fff;
  border-bottom: 1px solid #a0a0a0;
}
.group {
  display: flex;
  align-items: center;
  border-right: 1px solid #a0a0a0;
}
.group::before {
  content: "";
  width: 3px;
  height: 20px;
  margin: 0 2px 0 3px;
  background: repeating-linear-gradient(#a0a0a0 0 1px, transparent 1px 2px);
}
.group.first::before { margin: 0 1px 0 2px; }
.tool {
  display: flex;
  align-items: center;
  justify-content: center;
  width: 28px;
  height: 24px;
  color: #505050;
}
.tool.on {
  border: 1px solid #a0a0a0;
  border-right-color: #fff;
  border-bottom-color: #fff;
  background: #f8f8f8;
}
.tool.drop { width: 37px; justify-content: flex-start; padding-left: 5px; }
.tool.drop::after {
  content: "";
  margin-left: 4px;
  border: 3px solid transparent;
  border-top-color: #000;
  border-bottom: 0;
}
.tool.wide { width: auto; color: #000; justify-content: flex-start; gap: 4px; white-space: nowrap; }
.tool.order { width: 106px; padding-left: 5px; }
.tool.auto { width: 112px; padding-left: 2px; margin-right: 1px; }
.sep { width: 2px; height: 21px; margin: 0 2px; border-left: 1px solid #a0a0a0; border-right: 1px solid #fff; }
.letter { font: bold 11px/16px var(--ui); }
.tf { font: 9px/16px var(--ui); color: #303030; }

.search { display: flex; margin: 0 1px 0 auto; }
.search-box {
  width: 148px;
  height: 24px;
  border: 1px solid #b4b4b4;
  border-right: 0;
  background: #fff;
  outline: 0;
}
.search-go {
  width: 25px;
  height: 24px;
  border: 1px solid #b4b4b4;
  border-left: 0;
  background: #fff;
  display: grid;
  place-items: center;
}
.chat {
  width: 30px;
  height: 24px;
  border: 1px solid #c4c4c4;
  display: grid;
  place-items: center;
}
.bubble {
  position: relative;
  width: 16px;
  height: 12px;
  background: #6883b4;
  color: #fff;
  font: bold 11px/12px var(--ui);
}
.bubble::after {
  content: "";
  position: absolute;
  left: 3px;
  top: 12px;
  border: 2px solid transparent;
  border-top-color: #6883b4;
  border-right-color: #6883b4;
}

/* Chart */
.chart {
  flex: 1;
  display: grid;
  grid-template-columns: minmax(0, 1fr) 44px;
  grid-template-rows: minmax(0, 1fr) 20px;
  padding: 2px 0 0 2px;
  border-left: 2px solid #808080;
  border-top: 1px solid #606060;
  border-right: 4px solid #a8a8a8;
  box-shadow: inset -2px 0 #fff;
  background: #000;
  color: #fff;
  font: 9px/12px var(--ui);
}
.plot { position: relative; border: 1px solid #fff; }
.canvas { position: absolute; inset: 0; width: 100%; height: 100%; }
.canvas path { shape-rendering: crispEdges; }
.quote {
  position: absolute;
  left: 2px;
  top: 1px;
  margin: 0;
  white-space: nowrap;
  display: flex;
  align-items: center;
  gap: 5px;
}
.caret { border: 4px solid transparent; border-top-color: #fff; border-bottom: 0; }
.grid { stroke: #fff; stroke-dasharray: 3 3; fill: none; }
.down { stroke: #adff2f; }
.up { stroke: #ff1493; }
.flat { stroke: #ffc000; }
.bid { stroke: #778899; }
.trade { stroke: #f0f; stroke-dasharray: 4 3; }
.marks path {
  fill: #f0f;
  stroke: #fff;
  stroke-width: 2;
  paint-order: stroke;
  shape-rendering: auto;
}
.pen path {
  fill: none;
  stroke: #fff200;
  stroke-width: 3;
  stroke-linecap: round;
  stroke-linejoin: round;
  shape-rendering: auto;
}
.note { font: 12px var(--ui); fill: #fff200; }

.prices { position: relative; height: 0; }
.prices li { display: flex; height: 33px; gap: 3px; padding-right: 2px; }
.prices li::before { content: ""; width: 2px; height: 1px; margin-top: 6px; background: #fff; }
.prices .bid-tag {
  position: absolute;
  top: 738px;
  left: 1px;
  width: 41px;
  height: 12px;
  padding-left: 4px;
  background: #fff;
  color: #000;
}
.prices .bid-tag::before { display: none; }

.times { grid-column: 1 / -1; display: flex; overflow: hidden; padding-left: 1px; }
.times li { flex: 0 0 64px; white-space: nowrap; padding-top: 2px; position: relative; }
.times li::before { content: ""; position: absolute; left: 0; top: 0; width: 1px; height: 3px; background: #fff; }

/* Chart tabs */
.tabs {
  display: flex;
  height: 23px;
  padding-left: 5px;
  border-top: 2px solid #fff;
  border-bottom: 1px solid #fff;
  box-shadow: inset 0 1px #000;
  color: #808080;
}
.tab {
  height: 15px;
  margin-top: 3px;
  padding: 0 12px 4px;
  line-height: 11px;
  border-right: 1px solid #808080;
}
.tab.current {
  height: 19px;
  margin: 0 0 0 -1px;
  border: 1px solid #000;
  border-top: 0;
  background: #fff;
  color: #000;
}
.tab-scroll { display: flex; align-items: center; gap: 13px; margin-left: auto; padding: 0 7px 4px 0; }

/* Status bar */
.status { display: flex; height: 22px; align-items: center; overflow: hidden; }
.hint { flex: 1; padding-left: 2px; white-space: nowrap; }
.cell {
  display: flex;
  align-items: center;
  gap: 3px;
  width: 70px;
  height: 18px;
  padding-left: 5px;
  border-left: 1px solid #a0a0a0;
  white-space: nowrap;
}
.cell.profile { width: 116px; }
.cell.date { width: 102px; }
.cell.volume { width: 66px; }
.cell.traffic { width: 130px; }
```
